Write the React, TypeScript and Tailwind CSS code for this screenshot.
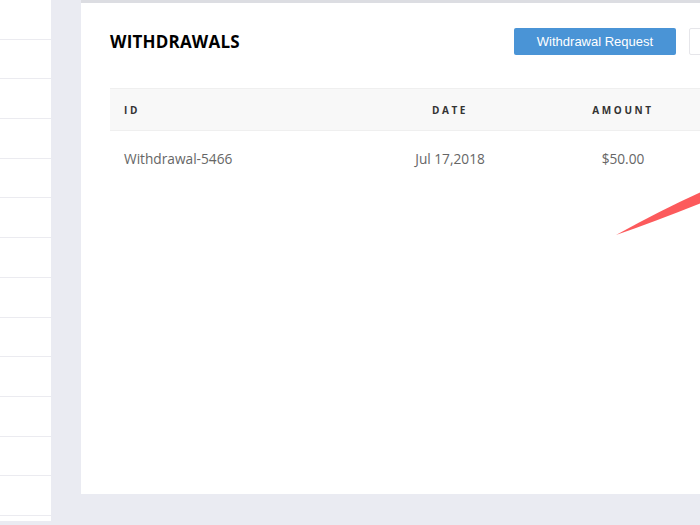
const sideRows = Array.from({ length: 13 }, (_, i) => i)

export default function App() {
  return (
    <div className="w-[700px] h-[525px] overflow-hidden bg-[#eaebf2] flex items-start" style={{ fontFamily: '"Open Sans", sans-serif' }}>
      {/* left menu strip */}
      <div className="w-[51px] h-[521px] bg-white flex flex-col shrink-0">
        {sideRows.map((i) => (
          <div key={i} className="h-[39.7px] border-b border-[#ebebf0] shrink-0" />
        ))}
      </div>

      {/* card */}
      <div className="relative ml-[30px] w-[680px] h-[494px] shrink-0 bg-white border-t-[3px] border-[#dcdde2]">
        <div className="flex items-center pl-[29px] pt-[25px] h-[52px]">
          <h2 className="text-[17px] font-bold text-black tracking-[0.2px] w-[404px] pt-[1px]">WITHDRAWALS</h2>
          <button className="w-[162px] h-[27px] rounded-[2px] bg-[#4a94d6] text-white text-[13px]" style={{ fontFamily: '"Liberation Sans", Arial, sans-serif' }}>
            Withdrawal Request
          </button>
          <div className="ml-[13px] w-[40px] h-[27px] rounded-[2px] border border-[#e6e6ea] bg-white" />
        </div>

        {/* table */}
        <div className="ml-[29px] mt-[33px]">
          <div className="grid grid-cols-[280px_120px_226px] h-[43px] items-center bg-[#f8f8f8] border-y border-[#efefef] text-[10px] font-bold tracking-[2.6px] text-[#333] pt-[2px]">
            <div className="pl-[14px]">ID</div>
            <div className="text-center">DATE</div>
            <div className="text-center">AMOUNT</div>
          </div>
          <div className="grid grid-cols-[280px_120px_226px] h-[56px] items-center text-[13.7px] text-[#666]">
            <div className="pl-[14px]">Withdrawal-5466</div>
            <div className="text-center">Jul 17,2018</div>
            <div className="text-center">$50.00</div>
          </div>
        </div>

        {/* red pointer arrow */}
        <svg className="absolute left-[530px] top-[185px]" width="100" height="60" viewBox="0 0 100 60">
          <path d="M5 47 Q50 22 90 4 L90 15 Q45 33 5 47 Z" fill="#fc5a5c" />
        </svg>
      </div>
    </div>
  )
}
